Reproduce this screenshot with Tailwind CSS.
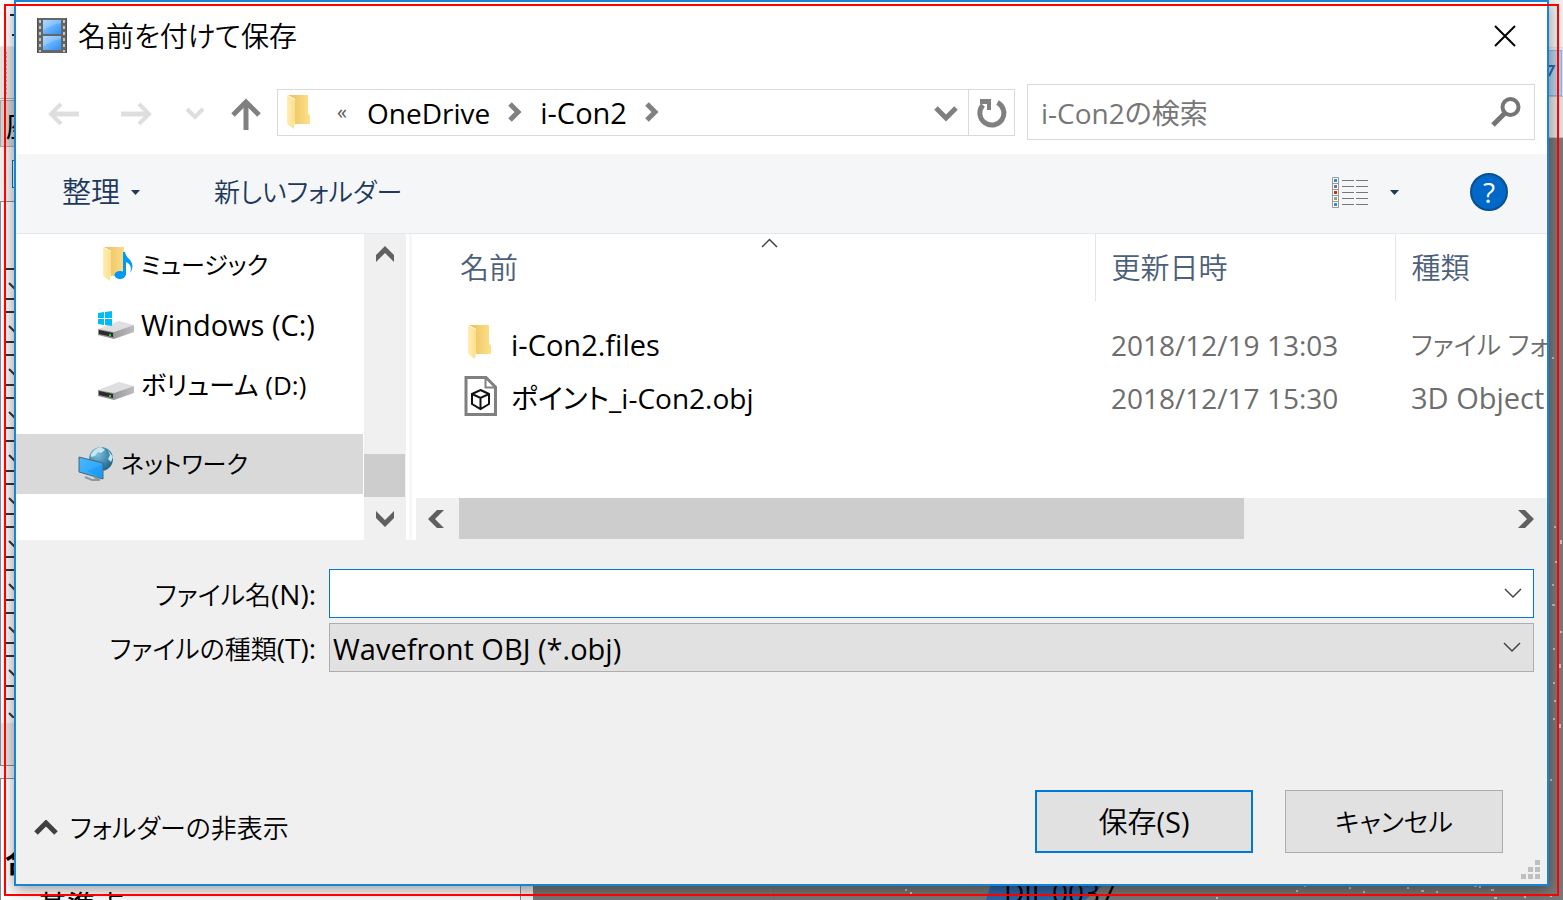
<!DOCTYPE html>
<html lang="ja">
<head>
<meta charset="utf-8">
<meta name="viewport" content="width=device-width, initial-scale=1">
<title>名前を付けて保存</title>
<script src="https://cdn.jsdelivr.net/npm/@tailwindcss/browser@4"></script>
</head>
<body class="relative h-screen overflow-hidden bg-[#f0f0f0] font-['Open_Sans','Noto_Sans_CJK_JP',sans-serif] text-[29px] leading-10 text-black [font-feature-settings:'palt'] [&_button]:cursor-default">

<!-- Shared icon shapes -->
<svg width="0" height="0" class="absolute" aria-hidden="true">
  <defs>
    <linearGradient id="fold" x1="0" x2="1"><stop offset="0" stop-color="#e9bf5c"/><stop offset="1" stop-color="#ffe08a"/></linearGradient>
    <linearGradient id="flap" x1="0" x2="1"><stop offset="0" stop-color="#ffeeb4"/><stop offset="1" stop-color="#fcdf8c"/></linearGradient>
    <linearGradient id="film" x1="0" y1="0" x2="1" y2="1"><stop offset="0" stop-color="#9bd0ff"/><stop offset="1" stop-color="#2d8ff5"/></linearGradient>
    <linearGradient id="side" x1="0" x2="1"><stop offset="0" stop-color="#9b9b9e"/><stop offset="1" stop-color="#bdbdc0"/></linearGradient>
    <radialGradient id="globe" cx=".35" cy=".3" r=".8"><stop offset="0" stop-color="#7fc0dc"/><stop offset=".6" stop-color="#3b86ac"/><stop offset="1" stop-color="#1e5a7d"/></radialGradient>
    <linearGradient id="screen" x1="0" y1="0" x2="1" y2="1"><stop offset="0" stop-color="#4ab8ff"/><stop offset="1" stop-color="#1fa0f8"/></linearGradient>
    <symbol id="folder" viewBox="0 0 24 35">
      <path d="M1 0H21V18L23 21V29H8V4Z" fill="url(#fold)"/>
      <path d="M0 0L8 5V25L7 34L0 29Z" fill="url(#flap)"/>
    </symbol>
    <symbol id="drive" viewBox="0 0 37 20">
      <path d="M0 9L21 1L36 5L16 12Z" fill="#dfdfe2"/>
      <path d="M16 12L36 5V12L16 19Z" fill="url(#side)"/>
      <path d="M0 9L16 12V19L0 15Z" fill="#8f8f8f"/>
      <path d="M1 10L15 13V17L1 14Z" fill="#2b2b2b"/>
      <path d="M11 14h2v2h-2z" fill="#27d23a"/>
    </symbol>
  </defs>
</svg>

<!-- Application behind the dialog -->
<div class="absolute inset-0 flex" aria-hidden="true">
  <div class="relative w-[533px] shrink-0 overflow-hidden bg-[#f0f0f0]">
    <svg class="absolute inset-0" width="533" height="900">
      <defs><pattern id="rows" width="14" height="43" patternUnits="userSpaceOnUse" y="268"><path d="M6 1H14M6 31H14M9 15L15 21" stroke="#333" stroke-width="2" fill="none"/></pattern></defs>
      <rect width="533" height="46" fill="#fff"/>
      <path d="M10 15h5M12 35h3M13 227h2M13 244h2M13 743h2M13 801h2" stroke="#222" stroke-width="2"/>
      <rect y="47" width="533" height="51" fill="#e4e4e4"/>
      <path d="M6.500 52V94" stroke="#aaa" stroke-dasharray="2 2"/>
      <path d="M0 98.500H533" stroke="#aaa"/>
      <rect x=".5" y="100.500" width="60" height="46" fill="#d4d4d4" stroke="#aaa"/>
      <rect x="12.500" y="160.500" width="20" height="27" fill="#fff" stroke="#0078b4"/>
      <rect x=".5" y="201.500" width="521" height="564" fill="#f8f8f8" stroke="#868a96"/>
      <rect x="6" y="267" width="8" height="451" fill="url(#rows)"/>
      <rect x="1" y="723" width="520" height="42" fill="#e6e6e6"/>
      <rect x=".5" y="778.500" width="520" height="140" fill="#fff" stroke="#868a96"/>
    </svg>
    <span class="absolute left-[6px] top-[106px]">座標</span>
    <span class="absolute left-[5px] top-[842px] font-bold">合計</span>
    <span class="absolute left-[38px] top-[886px]">基準点</span>
  </div>
  <div class="relative flex-1 overflow-hidden">
    <div class="h-[47px] bg-[#f0f0f0]"></div>
    <div class="flex h-[49px] justify-end border-t border-[#ddd] bg-[#e6e6e6]"><div class="mt-[2px] mr-px h-[46px] w-20 border border-[#7db8e8] bg-[#b4cde3]"></div></div>
    <div class="h-[42px] border-y border-[#bbb] bg-[#e0e0e0]"></div>
    <div class="h-[762px] bg-[#787878]"></div>
    <svg class="absolute inset-0 h-full w-full" viewBox="533 0 1030 900" preserveAspectRatio="xMaxYMax slice">
      <path d="M991 884H1105L1085 900H986Z" fill="#2f66a5"/>
      <path d="M1547 66h7L1549 76" stroke="#2b68a8" stroke-width="2" fill="none"/>
      <path d="M774 886v14" stroke="#8d6464"/>
      <path d="M1557 300h2M1552 358h2M1554 527h2M1561 540v4M1555 562h2M1552 585h2M1552 605h3M1560 632h2M1553 649h2M1560 664v4M1553 683h2M1554 701h2M1553 719h2M1560 724v4M1550 780h2M905 890h2M910 893h2M968 895h2M1296 891h2M1304 886h2M1349 888h2M1363 892h2M1407 888h2M1421 891h3M1436 892h2M1474 886h3M1479 887h2M1491 890h3M1524 897h2M1550 896h2M1494 898h3M1216 898h2" stroke="#bfc3b4" stroke-width="2"/>
    </svg>
    <span class="absolute bottom-[-12px] left-[471px] text-[28px]">DJI_0037</span>
  </div>
</div>

<!-- Save dialog -->
<main class="relative mx-[14px] border-2 border-[#1883d7] bg-white shadow-[0_4px_14px_rgba(0,0,0,0.4)]">
  <header class="flex h-[68px] items-center pr-6 pl-5">
    <svg width="32" height="38" viewBox="0 0 32 38">
      <rect x="1" y="1" width="30" height="35" rx="1" fill="#666"/>
      <rect x="7" y="3" width="18" height="14" fill="url(#film)"/><rect x="7" y="19" width="18" height="14" fill="url(#film)"/>
      <path d="M7 14Q15 7 25 6V3H7ZM7 30Q15 23 25 22V19H7Z" fill="#fff" opacity=".2"/>
      <path d="M4 3V35M28 3V35" stroke="#c4c4c4" stroke-width="2" stroke-dasharray="3 3"/>
      <path d="M1.500 1V36M30.500 1V36" stroke="#505050"/>
    </svg>
    <h1 class="ml-[10px] flex-1 text-[28px] font-[350]">名前を付けて保存</h1>
    <button aria-label="閉じる" class="flex size-9 items-center justify-center"><svg width="22" height="22"><path d="M1 1L21 21M21 1L1 21" stroke="#000" stroke-width="2"/></svg></button>
  </header>

  <nav class="flex h-[84px] items-center px-3">
    <button aria-label="戻る" class="mt-1 flex w-[72px] justify-center"><svg width="32" height="24" fill="none" stroke="#dedede"><path d="M3 12H31" stroke-width="5"/><path d="M13 2L3 12L13 22" stroke-width="4"/></svg></button>
    <button aria-label="進む" class="mt-1 flex w-[72px] justify-center"><svg width="32" height="24" fill="none" stroke="#dedede"><path d="M1 12H29" stroke-width="5"/><path d="M19 2L29 12L19 22" stroke-width="4"/></svg></button>
    <button aria-label="最近表示した場所" class="mt-1 flex w-[46px] justify-center"><svg width="20" height="14" fill="none" stroke="#dedede" stroke-width="4"><path d="M2 2L10 10L18 2"/></svg></button>
    <button aria-label="上へ" class="mt-1 flex w-[55px] justify-center"><svg width="30" height="32" fill="none" stroke="#808080"><path d="M15 4V32" stroke-width="5"/><path d="M2 17L15 4L28 17" stroke-width="5"/></svg></button>
    <div class="ml-1 flex h-[47px] flex-[736] items-center border border-[#d9d9d9]">
      <svg class="ml-[9px]" width="24" height="35"><use href="#folder"/></svg>
      <span class="ml-[26px] w-[30px] text-xl text-[#555]">«</span>
      <button class="pt-px text-[28px]">OneDrive</button>
      <svg class="mx-[18px]" width="14" height="20" fill="none" stroke="#808080" stroke-width="5"><path d="M2 2L10 10L2 18"/></svg>
      <button class="pt-px">i-Con2</button>
      <svg class="ml-[18px]" width="14" height="20" fill="none" stroke="#808080" stroke-width="5"><path d="M2 2L10 10L2 18"/></svg>
      <button aria-label="以前の場所" class="mt-1 ml-auto flex w-[44px] justify-center"><svg width="24" height="18" fill="none" stroke="#808080" stroke-width="5"><path d="M2 3L12 13L22 3"/></svg></button>
      <button aria-label="更新" class="flex h-full w-[46px] items-center justify-center border-l border-[#d9d9d9] pt-px"><svg width="30" height="30"><path d="M20.500 4.500A12 12 0 1 1 6 7" fill="none" stroke="#808080" stroke-width="5"/><path d="M3 1H14V12H10V6H3Z" fill="#808080"/></svg></button>
    </div>
    <label class="ml-3 flex h-[56px] flex-[481] items-center border border-[#d9d9d9] pr-3 pl-[13px]">
      <input type="search" aria-label="検索" placeholder="i-Con2の検索" class="min-w-0 flex-1 pt-px text-[28px] outline-none placeholder:text-[#777]">
      <svg width="32" height="32" fill="none" stroke="#757575"><circle cx="20.500" cy="11" r="8" stroke-width="4"/><path d="M15 17L3 29" stroke-width="5"/></svg>
    </label>
  </nav>

  <div class="flex h-20 items-center border-b border-[#e5e7ea] bg-[#f4f6f8] pr-[39px] pb-[3px] pl-[46px] font-[350] text-[#1e395b]">
    <button class="flex items-center gap-[11px] text-[29px]">整理<svg width="9" height="5"><path d="M0 0H9L4.500 5Z" fill="#1e395b"/></svg></button>
    <button class="ml-[74px] text-[26px]">新しいフォルダー</button>
    <button aria-label="表示方法の変更" class="ml-auto flex items-center gap-[22px]">
      <svg width="36" height="32" fill="none">
        <path d="M10 4.500H36M10 10.500H36M10 16.500H36M10 22.500H36M10 28.500H36" stroke="#777" stroke-dasharray="12 2"/>
        <path d="M.5 1.500H6.500V31.500H.5ZM.5 7.500H6.500M.5 13.500H6.500M.5 19.500H6.500M.5 25.500H6.500" fill="#fff" stroke="#999"/>
        <path d="M2 3h3v3h-3zM2 27h3v3h-3z" fill="#3c8ad0"/><path d="M2 9h3v3h-3z" fill="#6b78a0"/><path d="M2 15h3v3h-3z" fill="#cf2b1c"/><path d="M2 21h3v3h-3z" fill="#8aa87c"/>
      </svg>
      <svg width="9" height="5"><path d="M0 0H9L4.500 5Z" fill="#1e395b"/></svg>
    </button>
    <button aria-label="ヘルプ" class="ml-[71px] flex size-[38px] items-center justify-center rounded-full border-2 border-[#0b4f8f] bg-[#0068c8] text-[28px] font-normal text-white">?</button>
  </div>

  <div class="flex h-[306px]">
    <div class="w-[348px] shrink-0 overflow-hidden whitespace-nowrap pr-px">
      <div class="flex h-[61px] items-center pl-[87px]"><svg width="30" height="35"><use href="#folder" width="24" height="35"/><ellipse cx="17" cy="28" rx="5.500" ry="4" fill="#0099f5"/><path d="M20 28V5H22Q23 10 27 13Q32 19 27 26Q30 18 23 15V28Z" fill="#0099f5"/></svg><span class="ml-2 text-2xl">ミュージック</span></div>
      <div class="flex h-[60px] items-center pl-[82px]"><svg width="37" height="30"><use href="#drive" y="10" width="37" height="20"/><path d="M0 3L6 2V8H0ZM7 2L14 1V8H7ZM0 9H6V15L0 14ZM7 9H14V16L7 15Z" fill="#00bcf2"/></svg><span class="ml-[6px]">Windows (C:)</span></div>
      <div class="flex h-[60px] items-center pl-[82px]"><svg class="mt-3" width="37" height="20"><use href="#drive"/></svg><span class="ml-[6px] text-[26px]">ボリューム (D:)</span></div>
      <div class="mt-[19px] flex h-[60px] items-center bg-[#d9d9d9] pl-[62px]"><svg width="36" height="36"><circle cx="23" cy="13" r="12" fill="url(#globe)"/><path d="M13 8Q17 2 23 1L27 4L23 7L20 6L17 10L13 11ZM30 4L35 11L33 16L30 13L32 9Z" fill="#c9e6ec"/><path d="M1 11L25 17V33L1 26Z" fill="url(#screen)" stroke="#4d6675"/><path d="M9 25L24 19V32Z" fill="#1594ef" opacity=".5"/><path d="M7 31L14 34L22 34L16 31" fill="none" stroke="#8d9aa0" stroke-width="2"/></svg><span class="ml-[7px] text-2xl">ネットワーク</span></div>
    </div>
    <div class="flex w-[42px] shrink-0 flex-col bg-[#f0f0f0] pr-px">
      <button aria-label="上へスクロール" class="flex h-10 items-center justify-center"><svg width="20" height="18"><path d="M1 10L10 1L19 10V17L10 8L1 17Z" fill="#606060"/></svg></button>
      <div class="mt-auto h-[43px] bg-[#cdcdcd]"></div>
      <button aria-label="下へスクロール" class="flex h-[43px] items-center justify-center"><svg width="20" height="18"><path d="M1 8L10 17L19 8V1L10 10L1 1Z" fill="#606060"/></svg></button>
    </div>
    <div class="ml-[3px] w-[3px] shrink-0 bg-[#f7f7f7]"></div>
    <div class="flex min-w-0 flex-1 flex-col">
      <table class="w-full table-fixed border-collapse whitespace-nowrap text-left">
        <thead class="text-[29px] text-[#4c607a]">
          <tr class="h-[67px]">
            <th class="relative border-r border-[#e5e5e5] pl-12 font-[350]">名前<svg class="absolute top-1 left-[349px]" width="17" height="10" fill="none"><path d="M1 9L8.500 1.500L16 9" stroke="#444" stroke-width="1.500"/></svg></th>
            <th class="w-[300px] border-r border-[#e5e5e5] pl-4 font-[350]">更新日時</th>
            <th class="w-[152px] overflow-hidden pl-4 font-[350]">種類</th>
          </tr>
        </thead>
        <tbody class="text-[#6d6d6d]">
          <tr class="h-[17px]"><td colspan="3"></td></tr>
          <tr class="h-[53px]">
            <td class="pl-[52px] text-black"><div class="flex items-center"><svg class="mr-[19px] mb-1 ml-[4px]" width="24" height="35"><use href="#folder"/></svg>i-Con2.files</div></td>
            <td class="pl-4 text-[28px]">2018/12/19 13:03</td>
            <td class="overflow-hidden pl-4 text-[26px] font-[350]">ファイル フォルダー</td>
          </tr>
          <tr class="h-[53px]">
            <td class="pl-[52px] text-black"><div class="flex items-center"><svg class="mr-[14px] mb-1" width="33" height="40" fill="none"><path d="M2 1.500H22L31.500 11V38.500H2Z" fill="#fff" stroke="#808080" stroke-width="3"/><path d="M21.500 2V11.500H31" stroke="#808080" stroke-width="2"/><path d="M16.500 14L25 18V28L16.500 33L8 28V18ZM8 18L16.500 22L25 18M16.500 22V33" stroke="#111" stroke-width="2"/></svg><span class="text-[28px]">ポイント_i-Con2.obj</span></div></td>
            <td class="pl-4 text-[28px]">2018/12/17 15:30</td>
            <td class="overflow-hidden pl-4">3D Object</td>
          </tr>
        </tbody>
      </table>
      <div class="mt-auto ml-1 flex h-[42px] items-stretch bg-[#f0f0f0] pb-px">
        <button aria-label="左へスクロール" class="flex w-[43px] items-center justify-center pr-1"><svg width="18" height="20"><path d="M10 1L1 10L10 19H17L8 10L17 1Z" fill="#606060"/></svg></button>
        <div class="flex-1"><div class="h-full w-3/4 bg-[#cdcdcd]"></div></div>
        <button aria-label="右へスクロール" class="flex w-[42px] items-center justify-center"><svg width="18" height="20"><path d="M8 1L17 10L8 19H1L10 10L1 1Z" fill="#606060"/></svg></button>
      </div>
    </div>
  </div>

  <form class="relative bg-[#f0f0f0] pt-[29px] pb-[31px]">
    <div class="grid grid-cols-[300px_1fr] items-center gap-x-[13px] gap-y-[5px] pr-[13px]">
      <label for="name" class="pt-[2px] text-right text-[26px] font-[350]">ファイル名<span class="text-[28px] font-normal">(N):</span></label>
      <div class="flex h-[49px] border border-[#0078d7] bg-white">
        <input id="name" type="text" class="min-w-0 flex-1 px-1 outline-none">
        <button type="button" aria-label="ファイル名の一覧" class="flex w-[41px] items-center justify-center"><svg width="18" height="11" fill="none"><path d="M1 1L9 9L17 1" stroke="#444" stroke-width="1.500"/></svg></button>
      </div>
      <label for="type" class="pt-[2px] text-right text-[26px] font-[350]">ファイルの種類<span class="text-[28px] font-normal">(T):</span></label>
      <div class="relative h-[49px]">
        <select id="type" class="h-full w-full appearance-none border border-[#adadad] bg-[#e1e1e1] pt-[2px] pl-[3px] outline-none"><option>Wavefront OBJ (*.obj)</option></select>
        <svg class="pointer-events-none absolute top-[19px] right-[13px]" width="18" height="11" fill="none"><path d="M1 1L9 9L17 1" stroke="#444" stroke-width="1.500"/></svg>
      </div>
    </div>
    <div class="mt-[118px] flex items-center gap-8 pr-11 pl-[18px] font-[350]">
      <button type="button" class="mt-3 mr-auto flex items-center gap-3 text-[26px]"><svg width="24" height="16" fill="none"><path d="M2 13L12 3L22 13" stroke="#404040" stroke-width="5"/></svg>フォルダーの非表示</button>
      <button class="h-[63px] w-[218px] border-2 border-[#0078d7] bg-[#e1e1e1]">保存<span class="font-normal">(S)</span></button>
      <button type="button" class="h-[63px] w-[218px] border border-[#adadad] bg-[#e1e1e1] text-[26px]">キャンセル</button>
    </div>
    <svg class="absolute right-[7px] bottom-[5px]" width="19" height="19" fill="#bfbfbf"><path d="M14 0h5v5h-5zM14 7h5v5h-5zM14 14h5v5h-5zM7 7h5v5h-5zM7 14h5v5h-5zM0 14h5v5h-5z"/></svg>
  </form>
</main>

<!-- Red highlight frame -->
<div class="pointer-events-none absolute inset-1 border-2 border-[#ff0000]"></div>
</body>
</html>
